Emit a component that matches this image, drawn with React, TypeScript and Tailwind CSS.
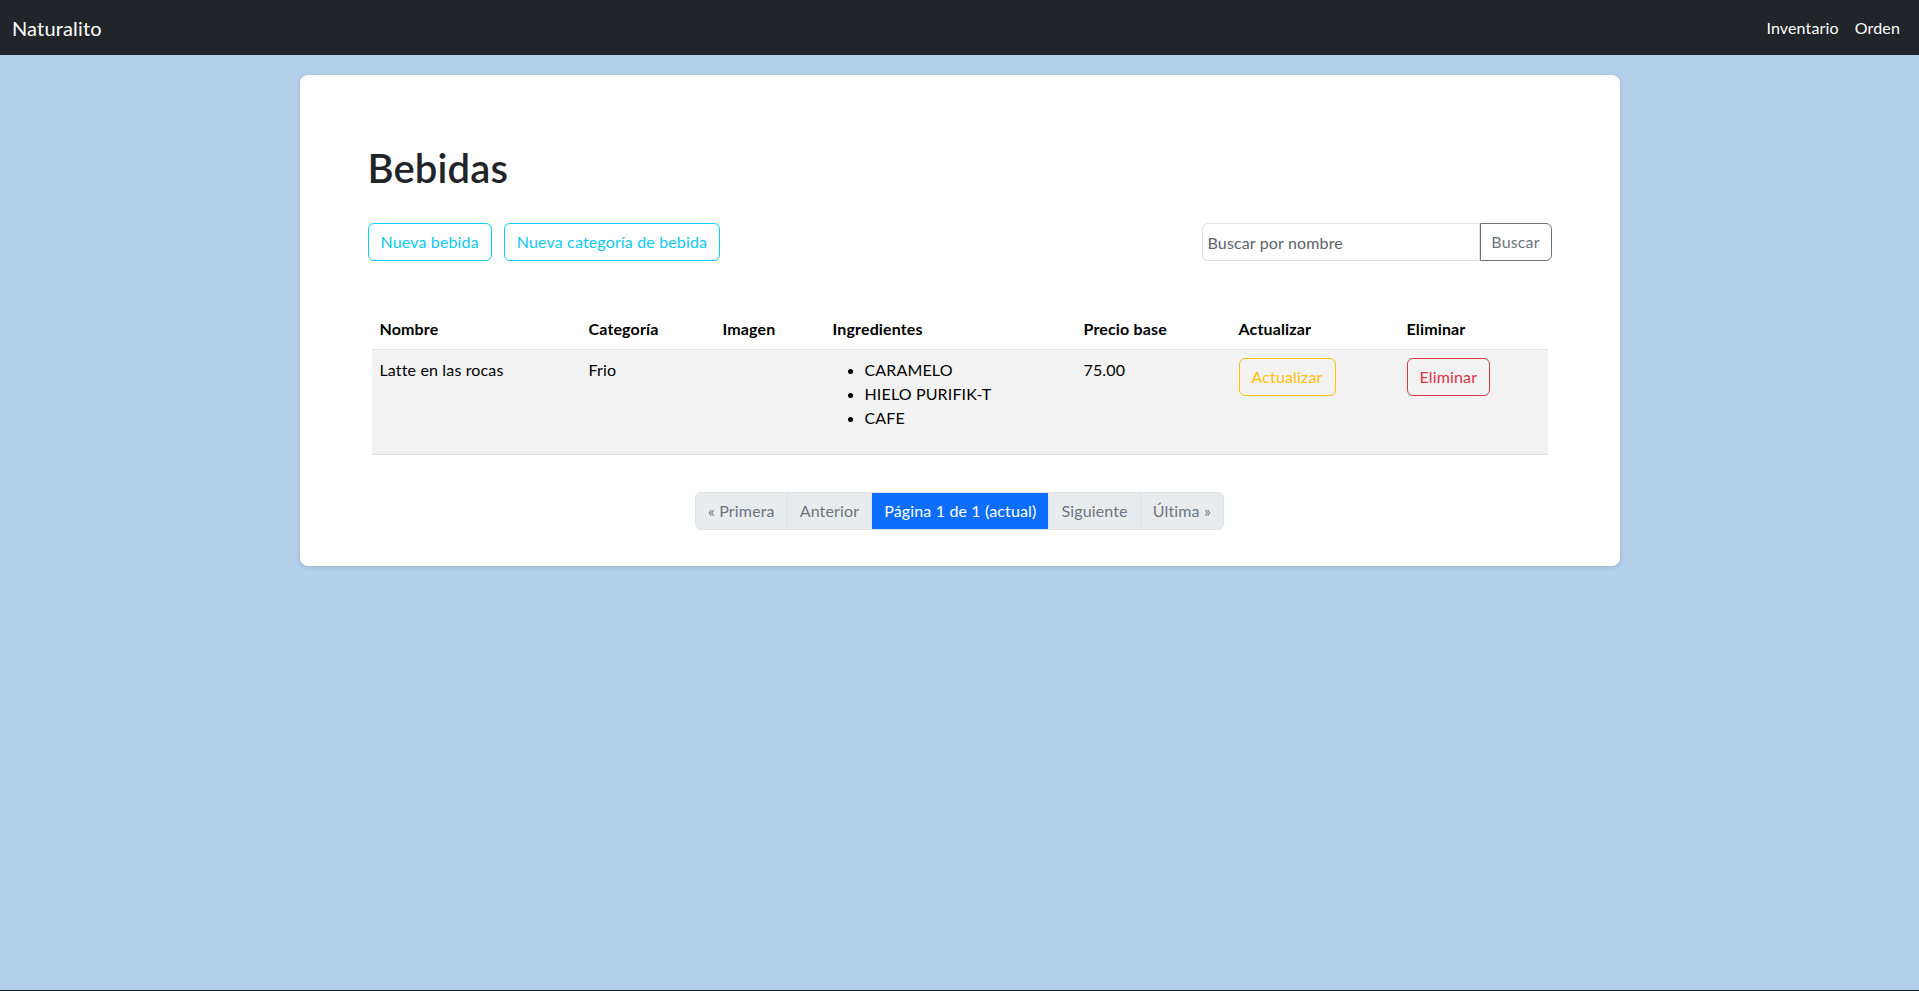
import React from "react";

const font = { fontFamily: "Lato, 'Noto Sans', sans-serif" };

const ingredients = ["CARAMELO", "HIELO PURIFIK-T", "CAFE"];

function Navbar() {
  return (
    <nav className="h-[55px] bg-[#212529] flex items-center justify-between pl-3 pr-[19px]">
      <a href="#" className="text-[20px] text-white leading-[30px]">Naturalito</a>
      <div className="flex items-center gap-[16px] text-[16px] text-white">
        <a href="#">Inventario</a>
        <a href="#">Orden</a>
      </div>
    </nav>
  );
}

function Pagination() {
  const base = "h-[38px] px-3 flex items-center border border-[#dee2e6] -ml-px first:ml-0";
  return (
    <div className="flex justify-center mt-[37px]">
      <div className="flex text-[16px]">
        <span className={`${base} bg-[#e9ecef] text-[#6c757d] rounded-l-[6px]`}>« Primera</span>
        <span className={`${base} bg-[#e9ecef] text-[#6c757d]`}>Anterior</span>
        <span className={`${base} bg-[#0d6efd] border-[#0d6efd] text-white relative`}>Página 1 de 1 (actual)</span>
        <span className={`${base} bg-[#e9ecef] text-[#6c757d]`}>Siguiente</span>
        <span className={`${base} bg-[#e9ecef] text-[#6c757d] rounded-r-[6px]`}>Última »</span>
      </div>
    </div>
  );
}

function DrinksTable() {
  return (
    <table className="mx-[4px] w-[1176px] table-fixed border-collapse text-[16px] text-black mt-[48px]">
      <thead>
        <tr className="border-b border-[#dee2e6]">
          <th className="w-[209px] p-2 text-left font-bold">Nombre</th>
          <th className="w-[134px] p-2 text-left font-bold">Categoría</th>
          <th className="w-[110px] p-2 text-left font-bold">Imagen</th>
          <th className="w-[251px] p-2 text-left font-bold">Ingredientes</th>
          <th className="w-[155px] p-2 text-left font-bold">Precio base</th>
          <th className="w-[168px] p-2 text-left font-bold">Actualizar</th>
          <th className="w-[149px] p-2 text-left font-bold">Eliminar</th>
        </tr>
      </thead>
      <tbody>
        <tr className="bg-[#f2f2f2] border-b border-[#dee2e6] align-top">
          <td className="p-2">Latte en las rocas</td>
          <td className="p-2">Frio</td>
          <td className="p-2"></td>
          <td className="p-2">
            <ul className="list-disc pl-8 mb-4">
              {ingredients.map((i) => (
                <li key={i}>{i}</li>
              ))}
            </ul>
          </td>
          <td className="p-2">75.00</td>
          <td className="p-2">
            <button className="h-[38px] px-3 border border-[#ffc107] text-[#ffc107] rounded-[6px]">Actualizar</button>
          </td>
          <td className="p-2">
            <button className="h-[38px] px-3 border border-[#dc3545] text-[#dc3545] rounded-[6px]">Eliminar</button>
          </td>
        </tr>
      </tbody>
    </table>
  );
}

export default function App() {
  return (
    <div style={font} className="min-h-screen flex flex-col bg-[#b4cfeb] leading-6 tracking-[0.15px]">
      <Navbar />
      <main className="flex-1 border-b border-[#1a1a1a] pt-[20px]">
        <div className="mx-auto w-[1320px] bg-white rounded-lg shadow-[0_1px_4px_rgba(0,0,0,0.15)] px-[68px] pt-[69px] pb-[36px]">
          <h1 className="text-[40px] leading-[48px] font-semibold text-[#212529] mb-[31px]">Bebidas</h1>
          <div className="flex items-center justify-between">
            <div className="flex">
              <button className="h-[38px] px-3 border border-[#0dcaf0] text-[#0dcaf0] rounded-[6px] text-[16px]">Nueva bebida</button>
              <button className="ml-[12px] h-[38px] px-3 border border-[#0dcaf0] text-[#0dcaf0] rounded-[6px] text-[16px]">Nueva categoría de bebida</button>
            </div>
            <div className="flex">
              <input
                placeholder="Buscar por nombre"
                className="w-[278px] h-[38px] px-[5px] border border-[#dee2e6] rounded-l-[6px] text-[16px] text-[#212529] placeholder:text-[#5c636a] outline-none"
              />
              <button className="w-[72px] h-[38px] border border-[#6c757d] text-[#6c757d] rounded-r-[6px] text-[16px]">Buscar</button>
            </div>
          </div>
          <DrinksTable />
          <Pagination />
        </div>
      </main>
    </div>
  );
}
